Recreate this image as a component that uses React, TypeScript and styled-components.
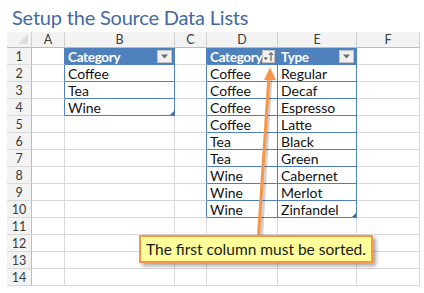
import React from 'react';
import styled, { createGlobalStyle } from 'styled-components';

const GlobalStyle = createGlobalStyle`
  body {
    margin: 0;
    background: #ffffff;
    font-family: Lato, "Liberation Sans", sans-serif;
  }
`;

const COLS = [25, 33, 110, 32, 71, 79, 63];
const LETTERS = ['', 'A', 'B', 'C', 'D', 'E', 'F'];
const ROW_COUNT = 14;
const TABLE_BLUE = '#4f81bd';
const GRID = '#d9d9d9';

interface Table {
  c0: number;
  c1: number;
  r0: number;
  r1: number;
}

const TABLES: Table[] = [
  { c0: 2, c1: 2, r0: 1, r1: 4 },
  { c0: 4, c1: 5, r0: 1, r1: 10 },
];

const VALUES: Record<string, string> = {
  'B2': 'Coffee',
  'B3': 'Tea',
  'B4': 'Wine',
};

const typeRows: [string, string][] = [
  ['Coffee', 'Regular'],
  ['Coffee', 'Decaf'],
  ['Coffee', 'Espresso'],
  ['Coffee', 'Latte'],
  ['Tea', 'Black'],
  ['Tea', 'Green'],
  ['Wine', 'Cabernet'],
  ['Wine', 'Merlot'],
  ['Wine', 'Zinfandel'],
];
typeRows.forEach(([cat, type], i) => {
  VALUES['D' + (i + 2)] = cat;
  VALUES['E' + (i + 2)] = type;
});

const tableAt = (r: number, c: number) =>
  TABLES.find((t) => r >= t.r0 && r <= t.r1 && c >= t.c0 && c <= t.c1);

const Page = styled.div`
  position: relative;
  width: 424px;
  height: 293px;
  padding-left: 7px;
  box-sizing: border-box;
  overflow: hidden;
`;

const Title = styled.h1`
  margin: 0 0 0 5px;
  height: 32px;
  font-family: Lato, "Liberation Sans", sans-serif;
  font-weight: 400;
  font-size: 20px;
  line-height: 34px;
  color: #4169a3;
  letter-spacing: -0.2px;
`;

const Sheet = styled.div`
  display: grid;
  grid-template-columns: ${COLS.map((w) => w + 'px').join(' ')};
  grid-template-rows: 16px repeat(${ROW_COUNT}, 17px);
  width: max-content;
`;

const ColHead = styled.div`
  box-sizing: border-box;
  background: #f3f3f3;
  border-right: 1px solid #d0d0d0;
  border-bottom: 1px solid #bdbdbd;
  display: flex;
  align-items: center;
  justify-content: center;
  font-size: 12.5px;
  color: #3a3a3a;
  position: relative;
`;

const Corner = styled(ColHead)`
  &::after {
    content: '';
    position: absolute;
    right: 3px;
    bottom: 3px;
    border-left: 10px solid transparent;
    border-bottom: 10px solid #dcdcdc;
  }
`;

const RowHead = styled.div`
  box-sizing: border-box;
  background: #f3f3f3;
  border-right: 1px solid #bdbdbd;
  border-bottom: 1px solid #d9d9d9;
  display: flex;
  align-items: center;
  justify-content: center;
  font-size: 12.5px;
  color: #3a3a3a;
`;

const Cell = styled.div<{ $header?: boolean; $rightBlue?: boolean; $bottomBlue?: boolean }>`
  box-sizing: border-box;
  position: relative;
  display: flex;
  align-items: center;
  padding: 1px 2px 0 3px;
  font-size: ${(p) => (p.$header ? '13.5px' : '14px')};
  letter-spacing: ${(p) => (p.$header ? '-0.3px' : '0')};
  white-space: nowrap;
  background: ${(p) => (p.$header ? TABLE_BLUE : '#ffffff')};
  color: ${(p) => (p.$header ? '#ffffff' : '#111111')};
  font-weight: ${(p) => (p.$header ? 700 : 400)};
  border-right: 1px solid ${(p) => (p.$rightBlue ? TABLE_BLUE : GRID)};
  border-bottom: 1px solid ${(p) => (p.$bottomBlue ? TABLE_BLUE : GRID)};
`;

const FilterButton = styled.div<{ $narrow?: boolean }>`
  margin-left: auto;
  width: ${(p) => (p.$narrow ? '13px' : '15px')};
  height: 13px;
  box-sizing: border-box;
  background: #f0f0f0;
  border: 1px solid #c4c4c4;
  display: flex;
  align-items: center;
  justify-content: center;
  flex-shrink: 0;
`;

const ResizeHandle = styled.span`
  position: absolute;
  right: 0;
  bottom: 0;
  border-left: 4px solid transparent;
  border-bottom: 4px solid #3b67a8;
`;

const Callout = styled.div`
  position: absolute;
  left: 139px;
  top: 235px;
  width: 234px;
  height: 28px;
  box-sizing: border-box;
  background: #ffff9c;
  border: 2px solid #f79646;
  box-shadow: 3px 3px 4px rgba(0, 0, 0, 0.35);
  display: flex;
  align-items: center;
  justify-content: center;
  font-family: Lato, "Liberation Sans", sans-serif;
  font-size: 15.5px;
  color: #1a1a1a;
`;

const ArrowLayer = styled.svg`
  position: absolute;
  left: 0;
  top: 0;
  pointer-events: none;
`;

const DropArrow = () => (
  <svg width="9" height="5" viewBox="0 0 9 5">
    <path d="M1 0.5 H8 L4.5 4.5 Z" fill="#6b6b6b" />
  </svg>
);

const SortArrow = () => (
  <svg width="11" height="11" viewBox="0 0 11 11">
    <path d="M0.5 6.5 H5 L2.75 9 Z" fill="#555" />
    <path d="M8 10 V2 M6 4 L8 1.6 L10 4" stroke="#444" strokeWidth="1" fill="none" />
  </svg>
);

export default function App() {
  const cells: React.ReactNode[] = [];

  COLS.forEach((_, c) => {
    cells.push(
      c === 0 ? <Corner key={'h' + c} /> : <ColHead key={'h' + c}>{LETTERS[c]}</ColHead>
    );
  });

  for (let r = 1; r <= ROW_COUNT; r++) {
    cells.push(<RowHead key={'r' + r}>{r}</RowHead>);
    for (let c = 1; c < COLS.length; c++) {
      const table = tableAt(r, c);
      const header = !!table && r === table.r0;
      const key = LETTERS[c] + r;
      let text: React.ReactNode = VALUES[key] || null;
      if (header) text = c === 5 ? 'Type' : 'Category';
      const isLast = !!table && r === table.r1 && c === table.c1;
      cells.push(
        <Cell
          key={key}
          $header={header}
          $rightBlue={!!table || !!tableAt(r, c + 1)}
          $bottomBlue={!!table}
        >
          {text}
          {header && (
            <FilterButton $narrow={c === 4}>{c === 4 ? <SortArrow /> : <DropArrow />}</FilterButton>
          )}
          {isLast && <ResizeHandle />}
        </Cell>
      );
    }
  }

  return (
    <>
      <GlobalStyle />
      <Page>
        <Title>Setup the Source Data Lists</Title>
        <Sheet>{cells}</Sheet>
        <ArrowLayer width="424" height="293" viewBox="0 0 424 293">
          <line x1="259.5" y1="236" x2="268.8" y2="78" stroke="rgba(0,0,0,0.18)" strokeWidth="4" transform="translate(1.5,1)" />
          <line x1="258.5" y1="236" x2="268.8" y2="78" stroke="#f79646" strokeWidth="3" />
          <path d="M270 67.5 L276 80 L264 80 Z" fill="#f79646" />
        </ArrowLayer>
        <Callout>The first column must be sorted.</Callout>
      </Page>
    </>
  );
}
